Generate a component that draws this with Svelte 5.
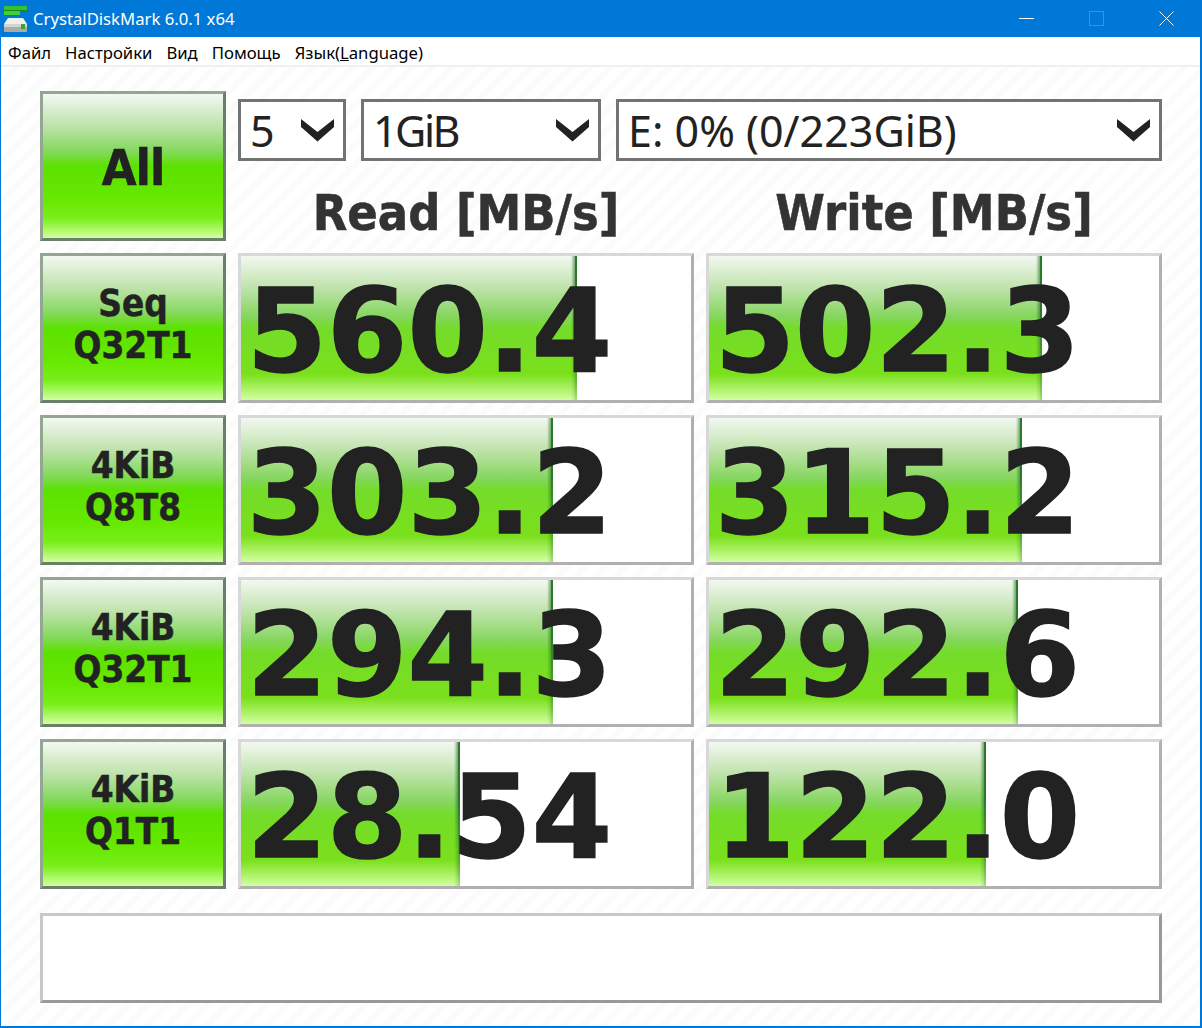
<script>
  const rows = [
    { a: 'Seq', b: 'Q32T1', r: '560.4', rw: 336, w: '502.3', ww: 333 },
    { a: '4KiB', b: 'Q8T8', r: '303.2', rw: 312, w: '315.2', ww: 313 },
    { a: '4KiB', b: 'Q32T1', r: '294.3', rw: 312, w: '292.6', ww: 309 },
    { a: '4KiB', b: 'Q1T1', r: '28.54', rw: 219, w: '122.0', ww: 277 }
  ];
</script>

<div class="window">
  <header class="titlebar">
    <svg class="appicon" viewBox="0 0 24 26" width="24" height="26">
      <rect x="0" y="0" width="23" height="4" fill="#36c22e" />
      <rect x="0" y="4" width="23" height="1" fill="#1c8a1a" />
      <rect x="0" y="5" width="16" height="4" fill="#3fd036" />
      <rect x="0" y="9" width="16" height="1" fill="#1c8a1a" />
      <path d="M4 12h15l4 6H0z" fill="#eef0ee" />
      <rect x="0" y="18" width="23" height="8" rx="1" fill="#a7aca7" />
      <rect x="0" y="18" width="23" height="3" fill="#d2d6d2" />
      <rect x="17" y="18" width="4" height="5" fill="#3aa52e" />
    </svg>
    <span class="title">CrystalDiskMark 6.0.1 x64</span>
    <div class="controls">
      <svg class="ctl" width="15" height="15" viewBox="0 0 15 15"><path d="M0 7.5h15" stroke="#fff" fill="none" /></svg>
      <svg class="ctl" width="15" height="15" viewBox="0 0 15 15"><rect x="0.5" y="0.5" width="14" height="14" stroke="#3a93e0" fill="none" /></svg>
      <svg class="ctl" width="15" height="15" viewBox="0 0 15 15"><path d="M0.5 0.5l14 14M14.5 0.5l-14 14" stroke="#fff" fill="none" /></svg>
    </div>
  </header>
  <nav class="menu">
    <span>Файл</span><span>Настройки</span><span>Вид</span><span>Помощь</span><span>Язык(<u>L</u>anguage)</span>
  </nav>
  <main class="content">
    <button class="btn">All</button>
    <div class="top">
      <div class="combos">
        <div class="combo c1"><span>5</span><svg viewBox="0 0 33 24" width="33" height="24"><path d="M0 1v8l16.5 14.5L33 9V1L16.500 14z" fill="#222" /></svg></div>
        <div class="combo c2"><span>1GiB</span><svg viewBox="0 0 33 24" width="33" height="24"><path d="M0 1v8l16.5 14.5L33 9V1L16.500 14z" fill="#222" /></svg></div>
        <div class="combo c3"><span>E: 0% (0/223GiB)</span><svg viewBox="0 0 33 24" width="33" height="24"><path d="M0 1v8l16.5 14.5L33 9V1L16.500 14z" fill="#222" /></svg></div>
      </div>
      <div class="heads">
        <div class="head">Read [MB/s]</div>
        <div class="head">Write [MB/s]</div>
      </div>
    </div>
    {#each rows as row}
      <button class="btn small">{row.a}<br />{row.b}</button>
      <div class="meter"><div class="fill" style="width:{row.rw}px"></div><span>{row.r}</span></div>
      <div class="meter"><div class="fill" style="width:{row.ww}px"></div><span>{row.w}</span></div>
    {/each}
    <div class="comment"></div>
  </main>
</div>

<style>
  :global(body) { margin: 0; background: #fff; }
  .window {
    width: 1202px; height: 1028px; box-sizing: border-box;
    border: 1px solid #0078d7; border-top: 0; border-width: 0 2px 2px 1px;
    display: flex; flex-direction: column;
    font-family: "Noto Sans", sans-serif; overflow: hidden;
  }
  .titlebar {
    height: 37px; flex: none; background: #0078d7; color: #fff;
    display: flex; align-items: center; padding-left: 3px; box-sizing: border-box; position: relative;
  }
  .appicon { flex: none; margin-right: 5px; margin-top: 1px; }
  .title { font-size: 16.7px; }
  .controls { margin-left: auto; display: flex; gap: 55px; padding-right: 26px; }
  .menu {
    height: 30px; flex: none; box-sizing: border-box; background: #fff;
    border-bottom: 2px solid #f0f0f0; padding-top: 2px;
    display: flex; align-items: center; gap: 14px; padding-left: 7px;
    font-size: 16.7px; color: #000;
  }
  .content {
    flex: 1;
    background: repeating-linear-gradient(135deg, #fff 0 8px, #fbfbfb 8px 14px);
    display: grid; grid-template-columns: 186px 456px 456px; grid-auto-rows: 150px;
    gap: 12px; padding: 24px 0 0 39px; align-content: start;
  }
  .btn {
    box-sizing: border-box; padding: 4px 0 0; margin: 0; width: 186px; height: 150px;
    border: 3px solid; border-color: #93a593 #6b7d6b #6b7d6b #93a593;
    background: linear-gradient(#f3f8f1 0%, #bfe3ac 22%, #82d95c 40%, #5ce200 50%, #66e800 72%, #78ee18 86%, #d2ffa0 100%);
    font-family: "DejaVu Sans Condensed", "DejaVu Sans", sans-serif; font-weight: 700; font-size: 50px; color: #222;
    letter-spacing: -1px; -webkit-text-stroke: 0.5px #222;
  }
  .btn.small { font-size: 36.5px; line-height: 42px; padding: 0 0 6px; letter-spacing: 0; }
  .top { grid-column: 2 / 4; display: flex; flex-direction: column; }
  .combos { display: flex; gap: 15px; margin-top: 8px; }
  .combo {
    box-sizing: border-box; height: 62px; background: #fff; border: 3px solid #737373;
    display: flex; align-items: center; justify-content: space-between;
    padding: 0 9px 0 9px; font-size: 43px; color: #222;
  }
  .combo svg { flex: none; }
  .c1 { width: 108px; }
  .c2 { width: 240px; letter-spacing: -2.5px; }
  .c3 { width: 546px; }
  .heads { display: grid; grid-template-columns: 456px 456px; gap: 12px; }
  .head {
    text-align: center; font-family: "DejaVu Sans Condensed", "DejaVu Sans", sans-serif; font-weight: 700; font-size: 50px;
    color: #333; line-height: 64px; margin-top: 20px; -webkit-text-stroke: 0.5px #333;
  }
  .meter {
    position: relative; box-sizing: border-box; height: 150px; background: #fff;
    border: 3px solid; border-color: #d8d8d8 #b0b0b0 #b0b0b0 #d8d8d8;
    font-family: "DejaVu Sans", sans-serif; font-weight: 700; font-size: 115.5px; color: #222;
    display: flex; align-items: center; justify-content: flex-end; padding: 7px 79px 0 0;
  }
  .fill {
    position: absolute; left: 0; top: 0; bottom: 0;
    background: linear-gradient(#f3f8f1 0%, #bfe3ac 22%, #85d65e 42%, #74dc2a 50%, #7ae01c 82%, #d2ffa0 100%);
  }
  .fill::after {
    content: ""; position: absolute; right: 0; top: 0; bottom: 0; width: 6px;
    background: linear-gradient(90deg, rgba(40,115,40,0) 0%, rgba(40,115,40,.55) 60%, #2a7a2a 70%);
    -webkit-mask-image: linear-gradient(#000 40%, rgba(0,0,0,.25) 100%);
    mask-image: linear-gradient(#000 40%, rgba(0,0,0,.25) 100%);
  }
  .meter span { position: relative; line-height: 1; -webkit-text-stroke: 1.5px #222; }
  .comment {
    grid-column: 1 / 4; height: 90px; margin-top: 12px; box-sizing: border-box;
    background: #fff; border: 3px solid; border-color: #c8c8c8 #999 #999 #c8c8c8;
  }
</style>
